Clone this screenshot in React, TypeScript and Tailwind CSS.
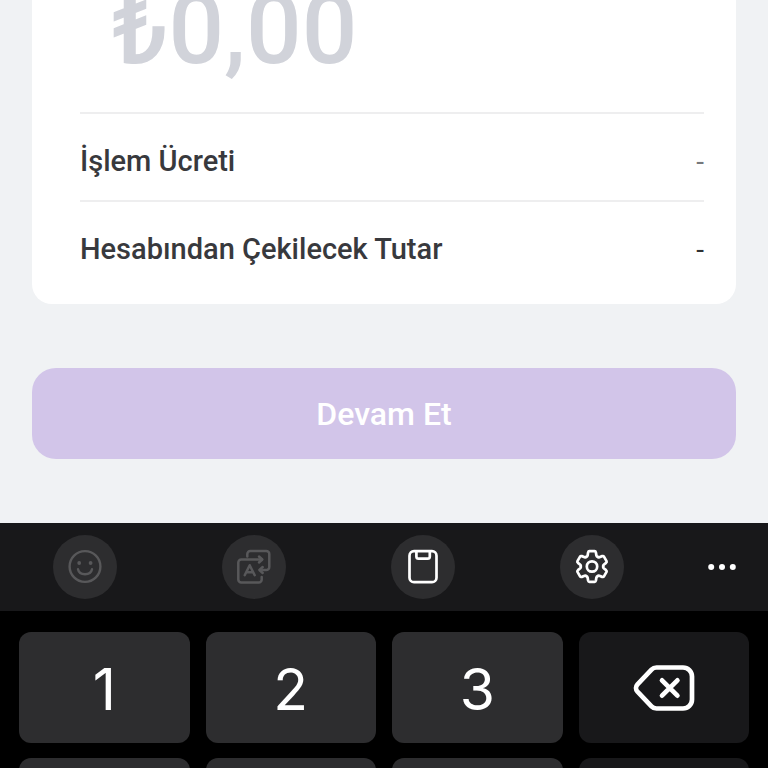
import type { ReactNode } from 'react';

interface Fee {
  label: string;
  value: string;
  valueClass: string;
}

const fees: Fee[] = [
  { label: 'İşlem Ücreti', value: '-', valueClass: 'text-[#76787c]' },
  { label: 'Hesabından Çekilecek Tutar', value: '-', valueClass: 'text-[#2f3134]' },
];

function SmileIcon() {
  return (
    <svg viewBox="0 0 36 36" className="w-9 h-9" fill="none" stroke="currentColor" strokeWidth="2.4" strokeLinecap="round">
      <circle cx="18" cy="17.5" r="15.4" />
      <path d="M11 20.2c.6 3 3.4 5 7 5s6.4-2 7-5" />
      <circle cx="12.2" cy="14" r="1.9" fill="currentColor" stroke="none" />
      <circle cx="23.6" cy="14" r="1.9" fill="currentColor" stroke="none" />
    </svg>
  );
}

function TranslateIcon() {
  return (
    <svg viewBox="0 0 36 36" className="w-9 h-9" fill="none" stroke="currentColor" strokeWidth="2.5" strokeLinecap="round" strokeLinejoin="round">
      <path d="M25.7 28v2.4a3 3 0 0 1-3 3H5.3a3 3 0 0 1-3-3V13.5a3 3 0 0 1 3-3H26" />
      <path d="M23 7.5l3.3 3-3.3 3" />
      <path d="M11.3 7.5V5a3 3 0 0 1 3-3h16a3 3 0 0 1 3 3v13a3 3 0 0 1-3 3H24" />
      <path d="M26.7 18l-3.3 3 3.3 3" />
      <path d="M8.7 26.2l5-10 5 10M10.5 23.2h6.4" />
    </svg>
  );
}

function ClipboardIcon() {
  return (
    <svg viewBox="0 0 36 36" className="w-9 h-9" fill="none" stroke="currentColor" strokeWidth="2.7" strokeLinejoin="round">
      <rect x="4.5" y="2.2" width="27" height="31" rx="4.5" />
      <path d="M11.4 2.2v5.3a2.2 2.2 0 0 0 2.2 2.2h9a2.2 2.2 0 0 0 2.2-2.2V2.2" />
    </svg>
  );
}

function GearIcon() {
  return (
    <svg viewBox="-18 -17.5 36 36" className="w-9 h-9" fill="none" stroke="currentColor" strokeWidth="2.7" strokeLinecap="round" strokeLinejoin="round">
      {[0, 60, 120, 180, 240, 300].map((angle) => (
        <path
          key={angle}
          transform={`rotate(${angle})`}
          d="M-5.6-9.7Q-4.6-10-4.4-11L-3.9-14Q-3.6-15.3-2.6-15.3H2.6Q3.6-15.3 3.9-14L4.4-11Q4.6-10 5.6-9.7"
        />
      ))}
      <circle r="5.2" />
    </svg>
  );
}

function MoreIcon() {
  return (
    <svg viewBox="0 0 32 12" className="w-8 h-3" fill="currentColor">
      <circle cx="5.2" cy="6" r="3" />
      <circle cx="16" cy="6" r="3" />
      <circle cx="26.8" cy="6" r="3" />
    </svg>
  );
}

function BackspaceIcon() {
  return (
    <svg viewBox="0 0 64 48" className="w-16 h-12" fill="none" stroke="currentColor" strokeWidth="4.7" strokeLinecap="round" strokeLinejoin="round">
      <path d="M24.5 3.5H51a9 9 0 0 1 9 9v23a9 9 0 0 1-9 9H24.5c-2 0-3.700-.8-5-2.200l-14-14.600c-2-2.200-2-5.200 0-7.400l14-14.600c1.300-1.400 3-2.200 5-2.200z" />
      <path d="M30 16.300l15.400 15.400M45.400 16.300l-15.400 15.400" />
    </svg>
  );
}

interface Tool {
  name: string;
  icon: ReactNode;
  disabled: boolean;
}

const tools: Tool[] = [
  { name: 'Emoji', icon: <SmileIcon />, disabled: true },
  { name: 'Çeviri', icon: <TranslateIcon />, disabled: true },
  { name: 'Pano', icon: <ClipboardIcon />, disabled: false },
  { name: 'Ayarlar', icon: <GearIcon />, disabled: false },
];

interface Key {
  name: string;
  content?: ReactNode;
  dark?: boolean;
}

// The second row only peeks in at the bottom edge, so its keys have no face
const keys: Key[] = [
  { name: '1', content: <span className="pt-1">1</span> },
  { name: '2', content: <span className="pt-1">2</span> },
  { name: '3', content: <span className="pt-1">3</span> },
  { name: 'Sil', content: <BackspaceIcon />, dark: true },
  { name: '4' },
  { name: '5' },
  { name: '6' },
  { name: 'Bitti', dark: true },
];

function Keyboard() {
  return (
    <section className="mt-16 flex-1 bg-black">
      <div className="flex h-22 items-center bg-[#18181a]">
        <div className="grid flex-1 grid-cols-4 justify-items-center">
          {tools.map((tool) => (
            <button
              key={tool.name}
              type="button"
              aria-label={tool.name}
              disabled={tool.disabled}
              className={`flex size-16 items-center justify-center rounded-full bg-[#2d2d2f] ${
                tool.disabled ? 'text-[#58585a]' : 'text-white'
              }`}
            >
              {tool.icon}
            </button>
          ))}
        </div>
        <button type="button" aria-label="Diğer" className="flex h-16 w-[92px] items-center justify-center text-white">
          <MoreIcon />
        </button>
      </div>

      <div className="grid grid-cols-4 gap-x-4 gap-y-[15px] px-[19px] pt-[21px]">
        {keys.map((key) => (
          <button
            key={key.name}
            type="button"
            aria-label={key.name}
            className={`flex h-[111px] items-center justify-center rounded-xl font-['Inter','Roboto',sans-serif] text-[57px] text-white ${
              key.dark ? 'bg-[#18181a]' : 'bg-[#2d2d2f]'
            }`}
          >
            {key.content}
          </button>
        ))}
      </div>
    </section>
  );
}

export default function App() {
  return (
    <div className="flex h-screen flex-col overflow-hidden bg-[#f0f2f4] font-['Roboto','Liberation_Sans',sans-serif]">
      <main className="px-8">
        {/* Amount card, scrolled partly under the top edge */}
        <div className="-mt-5 rounded-b-[20px] bg-white pr-8 pb-4 pl-12">
          <input
            type="text"
            inputMode="decimal"
            aria-label="Tutar"
            placeholder="₺0,00"
            className="mb-8 block h-25 w-full pl-8 text-[98px] leading-25 font-medium placeholder:text-[#d1d3da] focus:outline-none"
          />
          <dl>
            {fees.map((fee) => (
              <div
                key={fee.label}
                className="flex h-22 items-center justify-between border-t-2 border-[#eeeeef] pt-[10px]"
              >
                <dt className="text-[29px] font-medium text-[#38393d]">{fee.label}</dt>
                <dd className={`text-[28px] ${fee.valueClass}`}>{fee.value}</dd>
              </div>
            ))}
          </dl>
        </div>

        <button
          type="button"
          className="mt-16 block h-[91px] w-full rounded-3xl bg-[#d2c5e9] text-[32px] font-medium text-white"
        >
          Devam Et
        </button>
      </main>

      <Keyboard />
    </div>
  );
}
